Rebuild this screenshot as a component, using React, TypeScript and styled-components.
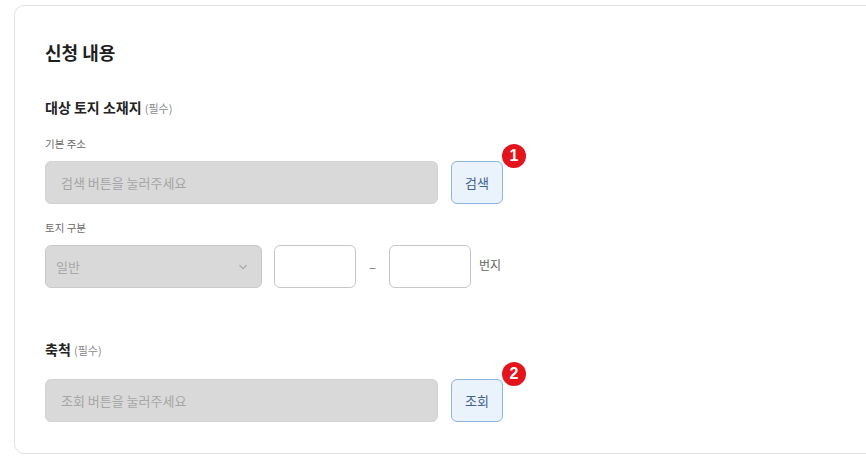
import React from "react";
import styled, { createGlobalStyle } from "styled-components";

const GlobalStyle = createGlobalStyle`
  html, body {
    margin: 0;
    padding: 0;
    background: #ffffff;
    overflow: hidden;
  }
  body {
    font-family: "Noto Sans CJK KR", "Noto Sans", sans-serif;
    color: #222;
  }
`;

function App() {
  return (
    <>
      <GlobalStyle />
      <Page>
        <Card>
          <Title>신청 내용</Title>

          <Section>
            <Heading>
              대상 토지 소재지 <Required>(필수)</Required>
            </Heading>
            <Label>기본 주소</Label>
            <Row>
              <Field readOnly placeholder="검색 버튼을 눌러주세요" $width={393} />
              <ButtonWrap>
                <ActionButton type="button">검색</ActionButton>
                <Badge>1</Badge>
              </ButtonWrap>
            </Row>

            <Label $top={16}>토지 구분</Label>
            <Row>
              <Select>
                <span>일반</span>
                <svg width="10" height="6" viewBox="0 0 10 6" fill="none">
                  <path d="M1.5 1.2 5 4.6 8.5 1.2" stroke="#a9a9a9" strokeWidth="1.2" />
                </svg>
              </Select>
              <NumberBox />
              <Dash>–</Dash>
              <NumberBox />
              <Suffix>번지</Suffix>
            </Row>
          </Section>

          <Section $top={51}>
            <Heading>
              축척 <Required>(필수)</Required>
            </Heading>
            <Row $top={19}>
              <Field readOnly placeholder="조회 버튼을 눌러주세요" $width={393} />
              <ButtonWrap>
                <ActionButton type="button">조회</ActionButton>
                <Badge>2</Badge>
              </ButtonWrap>
            </Row>
          </Section>
        </Card>
      </Page>
    </>
  );
}

export default App;

const Page = styled.div`
  padding: 5px 0 0 14px;
`;

const Card = styled.div`
  width: 900px;
  height: 449px;
  box-sizing: border-box;
  border: 1px solid #e2e2e2;
  border-radius: 10px;
  padding: 34px 0 0 30px;
  display: flex;
  flex-direction: column;
`;

const Title = styled.h2`
  margin: 0;
  font-size: 18px;
  line-height: 24px;
  font-weight: 700;
  color: #1f1f1f;
`;

const Section = styled.div<{ $top?: number }>`
  display: flex;
  flex-direction: column;
  margin-top: ${(p) => p.$top ?? 33}px;
`;

const Heading = styled.div`
  font-size: 14px;
  line-height: 20px;
  font-weight: 700;
  color: #222;
`;

const Required = styled.span`
  font-size: 11px;
  font-weight: 400;
  color: #8a8a8a;
`;

const Label = styled.div<{ $top?: number }>`
  margin-top: ${(p) => p.$top ?? 18}px;
  margin-bottom: 9px;
  font-size: 10.5px;
  line-height: 16px;
  color: #6a6a6a;
`;

const Row = styled.div<{ $top?: number }>`
  display: flex;
  align-items: center;
  margin-top: ${(p) => p.$top ?? 0}px;
`;

const Field = styled.input<{ $width: number }>`
  width: ${(p) => p.$width}px;
  height: 43px;
  box-sizing: border-box;
  border: 1px solid #d2d2d2;
  border-radius: 6px;
  background: #d9d9d9;
  padding: 0 15px;
  font-family: inherit;
  font-size: 13px;
  color: #555;
  outline: none;
  &::placeholder {
    color: #a5a5a5;
  }
`;

const ButtonWrap = styled.div`
  position: relative;
  margin-left: 13px;
`;

const ActionButton = styled.button`
  width: 52px;
  height: 43px;
  box-sizing: border-box;
  border: 1px solid #8fb4de;
  border-radius: 6px;
  background: #eaf2fc;
  font-family: inherit;
  font-size: 13px;
  color: #3f6190;
  cursor: pointer;
`;

const Badge = styled.span`
  position: absolute;
  left: 51px;
  top: -17px;
  width: 24px;
  height: 24px;
  border-radius: 50%;
  background: #e3141b;
  color: #fff;
  font-family: "Liberation Sans", Arial, sans-serif;
  font-weight: 700;
  font-size: 16px;
  display: flex;
  align-items: center;
  justify-content: center;
`;

const Select = styled.div`
  width: 217px;
  height: 43px;
  box-sizing: border-box;
  border: 1px solid #c9c9c9;
  border-radius: 6px;
  background: #d9d9d9;
  padding: 0 13px 0 10px;
  display: flex;
  align-items: center;
  justify-content: space-between;
  font-size: 13px;
  color: #a8a8a8;
`;

const NumberBox = styled.div`
  width: 82px;
  height: 43px;
  box-sizing: border-box;
  border: 1px solid #c6c6c6;
  border-radius: 6px;
  background: #fff;
  margin-left: 12px;
`;

const Dash = styled.span`
  width: 33px;
  margin-right: -12px;
  text-align: center;
  font-size: 13px;
  color: #777;
`;

const Suffix = styled.span`
  margin-left: 8px;
  margin-top: -4px;
  font-size: 12px;
  color: #666;
`;
